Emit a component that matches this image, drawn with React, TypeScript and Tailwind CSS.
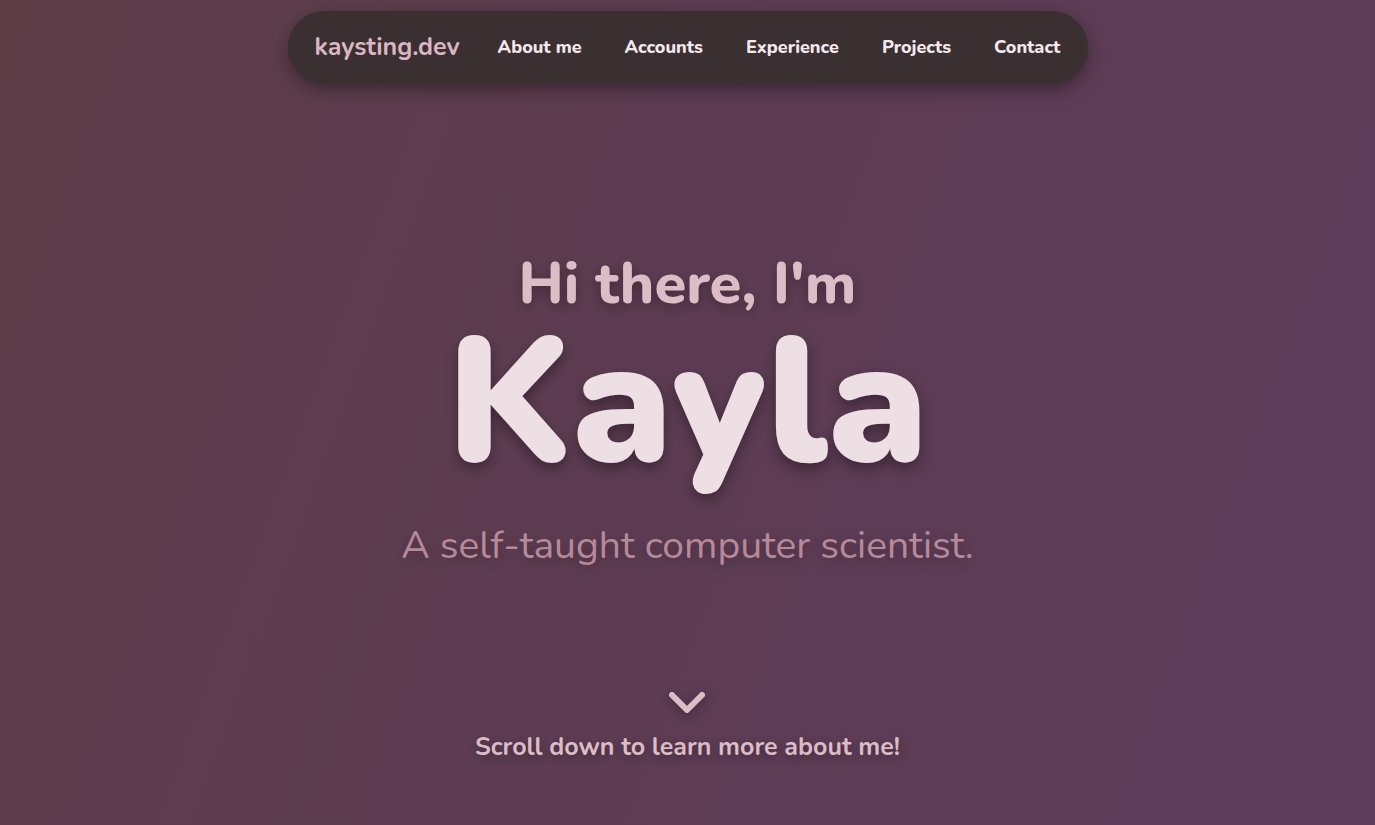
import React from "react";

export default function App() {
  const font = { fontFamily: "Nunito, Lato, 'Noto Sans', sans-serif" };
  return (
    <div
      className="w-full h-[825px] overflow-hidden flex flex-col items-center bg-[linear-gradient(110deg,#5d3e47_0%,#5d3c52_45%,#5d3d5b_100%)]"
      style={font}
    >
      <nav className="mt-[11px] w-[800px] h-[73px] rounded-full bg-[#3a2f31] shadow-[0_6px_18px_rgba(0,0,0,0.35)] flex items-center pl-[27px] pr-[27px]">
        <span className="text-[25px] font-bold text-[#dbb6c3] mr-[38px]">kaysting.dev</span>
        <div className="flex items-center gap-[43px] text-[18px] font-extrabold text-[#f3e8ec]">
          <span>About me</span>
          <span>Accounts</span>
          <span>Experience</span>
          <span>Projects</span>
          <span>Contact</span>
        </div>
      </nav>

      <div className="flex flex-col items-center mt-[173px]">
        <h2 className="text-[58px] leading-[54px] font-extrabold text-[#dcbcc5] [text-shadow:0_4px_12px_rgba(0,0,0,0.3)]">
          Hi there, I'm
        </h2>
        <h1 className="text-[176px] leading-[184px] font-black text-[#eddfe3] [text-shadow:0_6px_14px_rgba(0,0,0,0.35)]">
          Kayla
        </h1>
        <p className="mt-[26px] text-[39px] leading-[50px] font-normal text-[#b68a99] [text-shadow:0_4px_12px_rgba(0,0,0,0.25)]">
          A self-taught computer scientist.
        </p>
      </div>

      <div className="flex flex-col items-center mt-[118px]">
        <svg width="38" height="28" viewBox="0 0 38 28" className="[filter:drop-shadow(0_3px_6px_rgba(0,0,0,0.35))]">
          <path d="M4 6 L19 21 L34 6" fill="none" stroke="#dcbcc5" strokeWidth="6" strokeLinecap="round" strokeLinejoin="round" />
        </svg>
        <p className="mt-[12px] text-[25px] font-bold text-[#dcbcc5] [text-shadow:0_3px_10px_rgba(0,0,0,0.3)]">
          Scroll down to learn more about me!
        </p>
      </div>
    </div>
  );
}
